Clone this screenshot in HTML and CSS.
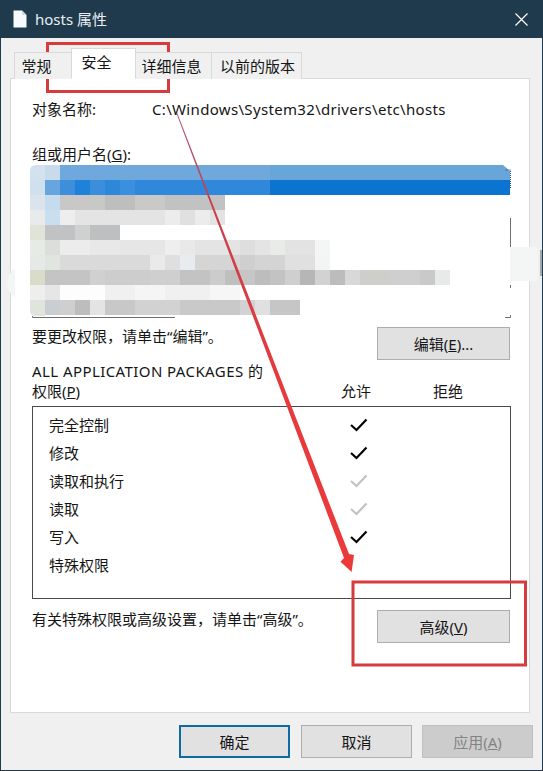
FILE: index.html
```html
<!DOCTYPE html>
<html lang="zh-CN">
<head>
<meta charset="utf-8">
<title>hosts 属性</title>
<link rel="stylesheet" href="styles.css">
</head>
<body>
<div class="window">
  <header class="titlebar">
    <svg class="doc-icon" width="14" height="18" viewBox="0 0 14 18"><path d="M0.5 0.5H9L13.5 5V17.5H0.5Z" fill="#f6fafd"/><path d="M9 0.5V5H13.5Z" fill="#cfdbe4"/></svg>
    <span class="title-text">hosts 属性</span>
    <svg class="close-icon" width="13" height="13" viewBox="0 0 13 13"><path d="M0.5 0.5L12.5 12.5M12.5 0.5L0.5 12.5" stroke="#fff" stroke-width="1.2" fill="none"/></svg>
  </header>

  <nav class="tabs">
    <div class="tab tab-general">常规</div>
    <div class="tab tab-active">安全</div>
    <div class="tab tab-details">详细信息</div>
    <div class="tab tab-previous">以前的版本</div>
  </nav>

  <main class="panel">
    <div class="object-row">
      <span class="object-label">对象名称:</span>
      <span class="object-path">C:\Windows\System32\drivers\etc\hosts</span>
    </div>

    <div class="group-label">组或用户名(<u>G</u>):</div>
    <svg class="mosaic" width="484" height="154" viewBox="30 165 484 154" aria-hidden="true">
      <defs>
        <clipPath id="mosaic-clip"><path d="M36 165H503L510 171V316H36Q30 316 30 310V171Q30 165 36 165Z"/></clipPath>
      </defs>
      <g clip-path="url(#mosaic-clip)">
      <g class="mosaic-cells" shape-rendering="crispEdges">
        <rect x="30" y="165" width="15" height="15" fill="#d3e2ee"/><rect x="45" y="165" width="15" height="15" fill="#c8dbea"/><rect x="60" y="165" width="210" height="15" fill="#6ea8dc"/><rect x="270" y="165" width="240" height="15" fill="#68a5d8"/>

        <rect x="30" y="180" width="15" height="15" fill="#cfe0ee"/><rect x="45" y="180" width="15" height="15" fill="#67a5de"/><rect x="60" y="180" width="15" height="15" fill="#3d8fdc"/><rect x="75" y="180" width="15" height="15" fill="#1e82d8"/><rect x="90" y="180" width="15" height="15" fill="#3a8edc"/><rect x="105" y="180" width="15" height="15" fill="#2e88da"/><rect x="120" y="180" width="15" height="15" fill="#3a8fde"/><rect x="135" y="180" width="135" height="15" fill="#2f88da"/><rect x="270" y="180" width="240" height="15" fill="#0a74d0"/>

        <rect x="30" y="195" width="15" height="15" fill="#dbe4ec"/><rect x="45" y="195" width="15" height="15" fill="#c5dbee"/><rect x="60" y="195" width="30" height="15" fill="#cac8c6"/><rect x="90" y="195" width="15" height="15" fill="#c8c8c7"/><rect x="105" y="195" width="30" height="15" fill="#bfbebe"/><rect x="135" y="195" width="30" height="15" fill="#cbc9c7"/><rect x="165" y="195" width="60" height="15" fill="#c2c2c2"/>

        <rect x="30" y="210" width="15" height="15" fill="#e8ebeb"/><rect x="45" y="210" width="15" height="15" fill="#c9deef"/><rect x="60" y="210" width="15" height="15" fill="#eeeeee"/><rect x="75" y="210" width="90" height="15" fill="#e4e4e4"/><rect x="165" y="210" width="15" height="15" fill="#ececec"/><rect x="180" y="210" width="15" height="15" fill="#e0e0e0"/><rect x="195" y="210" width="15" height="15" fill="#ececec"/><rect x="210" y="210" width="15" height="15" fill="#e3e3e3"/>

        <rect x="30" y="225" width="15" height="15" fill="#dfe3d8"/><rect x="45" y="225" width="30" height="15" fill="#c1c2c4"/><rect x="75" y="225" width="15" height="15" fill="#cfd0d0"/><rect x="90" y="225" width="30" height="15" fill="#bdbfc0"/>

        <rect x="30" y="240" width="15" height="15" fill="#e7ebe6"/><rect x="45" y="240" width="15" height="15" fill="#dcdedc"/><rect x="60" y="240" width="30" height="15" fill="#ececec"/><rect x="90" y="240" width="30" height="15" fill="#e8e8e8"/><rect x="120" y="240" width="45" height="15" fill="#e6e6e6"/><rect x="165" y="240" width="15" height="15" fill="#eeeeee"/><rect x="180" y="240" width="15" height="15" fill="#e9e9e9"/><rect x="195" y="240" width="45" height="15" fill="#e4e4e4"/><rect x="240" y="240" width="15" height="15" fill="#dedede"/><rect x="255" y="240" width="15" height="15" fill="#e4e4e4"/><rect x="270" y="240" width="15" height="15" fill="#e9ebe9"/><rect x="285" y="240" width="30" height="15" fill="#e2e3e2"/><rect x="315" y="240" width="15" height="15" fill="#f4f6f5"/>

        <rect x="30" y="255" width="15" height="15" fill="#e6eae6"/><rect x="45" y="255" width="15" height="15" fill="#dfe6df"/><rect x="60" y="255" width="90" height="15" fill="#d9dad9"/><rect x="150" y="255" width="15" height="15" fill="#eaeaea"/><rect x="165" y="255" width="15" height="15" fill="#dfdfdf"/><rect x="180" y="255" width="15" height="15" fill="#e8ecee"/><rect x="195" y="255" width="45" height="15" fill="#d5d5d5"/><rect x="240" y="255" width="15" height="15" fill="#cfcfcf"/><rect x="255" y="255" width="30" height="15" fill="#d4d4d4"/><rect x="285" y="255" width="30" height="15" fill="#e0e0e0"/><rect x="315" y="255" width="15" height="15" fill="#f3f4f4"/>

        <rect x="30" y="270" width="15" height="15" fill="#d8dcc9"/><rect x="45" y="270" width="45" height="15" fill="#c4c4c4"/><rect x="90" y="270" width="15" height="15" fill="#d0d0d0"/><rect x="105" y="270" width="45" height="15" fill="#cdcdcd"/><rect x="150" y="270" width="30" height="15" fill="#cfcfcf"/><rect x="180" y="270" width="30" height="15" fill="#c3c3c3"/><rect x="210" y="270" width="15" height="15" fill="#cccccc"/><rect x="225" y="270" width="15" height="15" fill="#bfbfbf"/><rect x="240" y="270" width="15" height="15" fill="#c6c6c6"/><rect x="255" y="270" width="15" height="15" fill="#bdbdbd"/><rect x="270" y="270" width="15" height="15" fill="#c3c3c3"/><rect x="285" y="270" width="15" height="15" fill="#cfcfcf"/><rect x="300" y="270" width="15" height="15" fill="#b6b6b6"/><rect x="315" y="270" width="15" height="15" fill="#d2d2d2"/><rect x="330" y="270" width="15" height="15" fill="#bcbcbc"/><rect x="345" y="270" width="15" height="15" fill="#d8d8d8"/><rect x="360" y="270" width="30" height="15" fill="#cfcfca"/><rect x="390" y="270" width="30" height="15" fill="#cfcfcf"/><rect x="420" y="270" width="15" height="15" fill="#c9c9c9"/><rect x="435" y="270" width="15" height="15" fill="#e8eaea"/>

        <rect x="30" y="285" width="15" height="15" fill="#eeefec"/><rect x="45" y="285" width="15" height="15" fill="#e6e6e6"/><rect x="60" y="285" width="45" height="15" fill="#fdfdfd"/><rect x="105" y="285" width="30" height="15" fill="#f0f0f0"/><rect x="135" y="285" width="30" height="15" fill="#f5f5f5"/><rect x="165" y="285" width="45" height="15" fill="#f0f0f0"/><rect x="210" y="285" width="30" height="15" fill="#f6f6f6"/>

        <rect x="30" y="300" width="15" height="16" fill="#dfe4dc"/><rect x="45" y="300" width="15" height="15" fill="#c9ced2"/><rect x="60" y="300" width="15" height="15" fill="#cfcfcf"/><rect x="75" y="300" width="15" height="15" fill="#bdbdbd"/><rect x="90" y="300" width="15" height="15" fill="#e4e4e4"/><rect x="105" y="300" width="30" height="15" fill="#c8c8c8"/><rect x="135" y="300" width="45" height="15" fill="#d2d2d2"/><rect x="180" y="300" width="60" height="15" fill="#c9c9c9"/><rect x="240" y="300" width="15" height="15" fill="#d2d2d2"/><rect x="255" y="300" width="15" height="15" fill="#e0e0e0"/><rect x="270" y="300" width="30" height="15" fill="#c6c6c6"/>
      </g>
      </g>
      <path d="M32.5 316V317.5H175M505 317.5H510.5V315M510.5 218V247M510.5 285V288" stroke="#6f6f6f" fill="none"/>
      <path d="M505.5 170H510.5V188" stroke="#27506f" stroke-dasharray="1 1" fill="none"/>
    </svg>

    <div class="action-row row-edit">
      <span class="action-text">要更改权限&#xFF0C;请单击“编辑”。</span>
      <button class="btn btn-side">编辑(<u>E</u>)...</button>
    </div>

    <div class="perm-title">ALL APPLICATION PACKAGES 的</div>
    <div class="perm-head">
      <span class="perm-head-label">权限(<u>P</u>)</span>
      <span class="perm-head-allow">允许</span>
      <span class="perm-head-deny">拒绝</span>
    </div>

    <div class="perm-box">
      <div class="perm-row"><span class="perm-name">完全控制</span><svg class="check" width="18" height="14" viewBox="0 0 18 14"><path d="M1 7L6.5 12L16.5 1.5" class="tick"/></svg></div>
      <div class="perm-row"><span class="perm-name">修改</span><svg class="check" width="18" height="14" viewBox="0 0 18 14"><path d="M1 7L6.5 12L16.5 1.5" class="tick"/></svg></div>
      <div class="perm-row"><span class="perm-name">读取和执行</span><svg class="check" width="18" height="14" viewBox="0 0 18 14"><path d="M1 7L6.5 12L16.5 1.5" class="tick tick-off"/></svg></div>
      <div class="perm-row"><span class="perm-name">读取</span><svg class="check" width="18" height="14" viewBox="0 0 18 14"><path d="M1 7L6.5 12L16.5 1.5" class="tick tick-off"/></svg></div>
      <div class="perm-row"><span class="perm-name">写入</span><svg class="check" width="18" height="14" viewBox="0 0 18 14"><path d="M1 7L6.5 12L16.5 1.5" class="tick"/></svg></div>
      <div class="perm-row"><span class="perm-name">特殊权限</span></div>
    </div>

    <div class="action-row row-advanced">
      <span class="action-text">有关特殊权限或高级设置&#xFF0C;请单击“高级”。</span>
      <button class="btn btn-side">高级(<u>V</u>)</button>
    </div>
  </main>

  <footer class="footer">
    <button class="btn btn-footer btn-default">确定</button>
    <button class="btn btn-footer">取消</button>
    <button class="btn btn-footer btn-disabled">应用(<u>A</u>)</button>
  </footer>
</div>

<svg class="annotations" width="543" height="771" viewBox="0 0 543 771" aria-hidden="true">
  <defs>
    <linearGradient id="arrow-fill" x1="0" y1="113" x2="0" y2="572" gradientUnits="userSpaceOnUse">
      <stop offset="0" stop-color="#a9506c"/>
      <stop offset="0.22" stop-color="#c9404c"/>
      <stop offset="0.55" stop-color="#e53a3c"/>
      <stop offset="1" stop-color="#ec3a3a"/>
    </linearGradient>
  </defs>
  <path d="M510 247H538V281H510Z" fill="#f4f6f5"/>
  <rect x="540" y="250" width="2" height="26" fill="#a8a8a8"/>
  <path d="M15 268V298Q8 292 6 283Q8 274 15 268Z" fill="#f4f5f5"/>
  <path d="M176.3 113L177.2 113L349 554L354 555L351.6 572L340.5 561.7L344 558Z" fill="url(#arrow-fill)"/>
  <rect x="47.5" y="43.5" width="121" height="48" class="callout"/>
  <rect x="353" y="582" width="172.5" height="83" class="callout"/>
</svg>
</body>
</html>
```

FILE: styles.css
```css
* { box-sizing: border-box; }

html, body {
  margin: 0;
  padding: 0;
  overflow: hidden;
}

body {
  position: relative;
  width: 543px;
  height: 771px;
  font-family: "Noto Sans", "Noto Sans CJK SC", sans-serif;
  font-size: 15px;
  line-height: 20px;
  color: #151515;
}

.window {
  display: flex;
  flex-direction: column;
  width: 543px;
  height: 771px;
  background: #f0f0f0;
  border: 1px solid #1f3a4c;
  border-top: 0;
}

.titlebar {
  display: flex;
  align-items: center;
  height: 38px;
  margin: 0 -1px;
  padding: 0 15px 0 13px;
  background: #1f3a4d;
  color: #e9eef2;
  flex: none;
}

.doc-icon { display: block; flex: none; }

.title-text {
  margin-left: 8px;
  font-size: 15px;
}

.close-icon { display: block; margin-left: auto; }

.tabs {
  display: flex;
  align-items: flex-end;
  height: 40px;
  padding-left: 13px;
  flex: none;
  position: relative;
  z-index: 1;
}

.tab {
  height: 27px;
  margin-bottom: -1px;
  border: 1px solid #d9d9d9;
  border-bottom: 0;
  background: #f0f0f0;
  text-align: center;
  line-height: 27px;
}

.tab-general { width: 57px; border-right: 0; padding-right: 13px; }
.tab-details { width: 75px; border-right: 0; border-left: 0; padding-right: 4px; }
.tab-previous { width: 91px; padding-left: 2px; }

.tab-active {
  width: 65px;
  height: 31px;
  padding-right: 14px;
  background: #fff;
  border-bottom: 1px solid #fff;
  line-height: 27px;
}

.panel {
  display: flex;
  flex-direction: column;
  height: 635px;
  margin-left: 9px;
  width: 520px;
  padding: 20px 19px 0 21px;
  background: #fff;
  border: 1px solid #d9d9d9;
  flex: none;
}

.object-row { display: flex; }
.object-label { width: 120px; }
.object-path { letter-spacing: 0.33px; }

.group-label { margin-top: 25px; }

.mosaic {
  display: block;
  margin-top: 1px;
  margin-left: -2px;
  flex: none;
}

.mosaic-cells { filter: blur(0.4px); }

.action-row {
  display: flex;
  justify-content: space-between;
  align-items: flex-start;
}

.action-text { margin-top: -1px; }

.row-edit { margin-top: 8px; }
.row-advanced { margin-top: 11px; }

.perm-title { margin-top: 1px; letter-spacing: 0.42px; }

.perm-head {
  display: flex;
  height: 20px;
}

.perm-head-label { width: 309px; }
.perm-head-allow { width: 92px; }

.perm-box {
  height: 193px;
  margin: 5px -1px 0 0;
  padding-top: 4px;
  border: 1px solid #4a4a4a;
  flex: none;
}

.perm-row {
  display: flex;
  align-items: center;
  height: 28px;
  padding-left: 16px;
  position: relative;
}

.perm-name { width: 301px; }

.check { display: block; flex: none; }

.tick {
  fill: none;
  stroke: #050505;
  stroke-width: 2.2;
}

.tick-off { stroke: #c2c2c2; }

.btn {
  display: block;
  padding: 0;
  font: inherit;
  color: inherit;
  background: #e1e1e1;
  border: 1px solid #adadad;
  flex: none;
}

.btn-side {
  width: 133px;
  height: 33px;
}

.footer {
  display: flex;
  justify-content: flex-end;
  gap: 10px;
  padding: 12px 9px 0 0;
}

.btn-footer {
  width: 111px;
  height: 33px;
}

.btn-default {
  margin-right: 1px;
  border: 2px solid #0f6aa3;
}

.btn-disabled {
  background: #cccccc;
  border-color: #bfbfbf;
  color: #838383;
}

.annotations {
  position: absolute;
  top: 0;
  left: 0;
  pointer-events: none;
}

.callout {
  fill: none;
  stroke: #d63c3e;
  stroke-width: 3;
}
```
